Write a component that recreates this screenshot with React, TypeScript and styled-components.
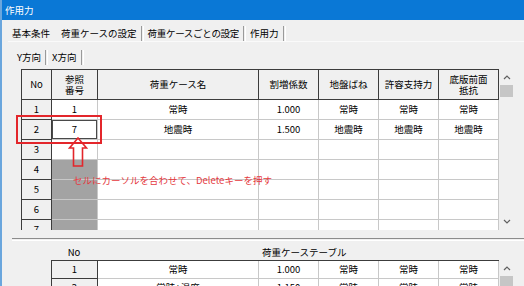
import React from "react";
import styled, { createGlobalStyle } from "styled-components";

const GlobalStyle = createGlobalStyle`
  html, body {
    margin: 0;
    padding: 0;
    background: #f0f0f0;
  }
  body {
    font-family: "Noto Sans CJK JP", "Noto Sans", sans-serif;
    font-size: 9.5px;
    color: #000;
  }
`;

const Window = styled.div`
  width: 524px;
  height: 286px;
  overflow: hidden;
  box-sizing: border-box;
  border-left: 2px solid #6aa6dd;
  display: flex;
  flex-direction: column;
  background: #f0f0f0;
`;

const TitleBar = styled.div`
  height: 20px;
  flex: none;
  background: #0a78d6;
  color: #fff;
  font-size: 9.5px;
  display: flex;
  align-items: center;
  padding-left: 3px;
`;

const Content = styled.div`
  display: flex;
  flex-direction: column;
  padding-left: 10px;
`;

const TabStrip = styled.div`
  display: flex;
  align-items: center;
  height: 16px;
  margin-top: 5px;
  margin-left: -4px;
  border-bottom: 1px solid #fafafa;
`;

const SubTabStrip = styled.div`
  display: flex;
  align-items: center;
  height: 18px;
  margin-top: 6px;
  padding-left: 1px;
`;

const Tab = styled.span<{ $tight?: boolean }>`
  padding: 0 4px;
  white-space: nowrap;
  line-height: 14px;
  letter-spacing: ${(p) => (p.$tight ? "-0.3px" : "normal")};
`;

const TabSep = styled.span<{ $hidden?: boolean }>`
  width: 1px;
  height: 15px;
  border-left: 1px solid ${(p) => (p.$hidden ? "transparent" : "#9a9a9a")};
  border-right: 1px solid ${(p) => (p.$hidden ? "transparent" : "#ffffff")};
`;

const GridArea = styled.div`
  position: relative;
  margin-top: 3px;
  margin-left: 9px;
  width: 494px;
`;

const GridClip = styled.div<{ $h: number }>`
  display: flex;
  height: ${(p) => p.$h}px;
  overflow: hidden;
`;

const Grid = styled.div<{ $cols: string; $rows: string }>`
  display: grid;
  grid-template-columns: ${(p) => p.$cols};
  grid-template-rows: ${(p) => p.$rows};
  grid-auto-rows: 20px;
  border-left: 1px solid #3c3c3c;
  border-top: 1px solid #3c3c3c;
  align-self: flex-start;
`;

type CellKind = "head" | "row" | "data" | "shaded";

const Cell = styled.div<{ $kind: CellKind; $focus?: boolean }>`
  box-sizing: border-box;
  display: flex;
  align-items: center;
  justify-content: center;
  text-align: center;
  line-height: 11px;
  white-space: pre-line;
  overflow: hidden;
  background: ${(p) =>
    p.$kind === "data" ? "#ffffff" : p.$kind === "shaded" ? "#a3a3a3" : "#f0f0f0"};
  border-right: 1px solid
    ${(p) => (p.$kind === "head" || p.$kind === "row" ? "#3c3c3c" : "#c8c8c8")};
  border-bottom: 1px solid
    ${(p) => (p.$kind === "head" || p.$kind === "row" ? "#3c3c3c" : "#c8c8c8")};
  box-shadow: ${(p) => (p.$focus ? "inset 0 0 0 1px #4a4a4a" : "none")};
`;

const ScrollBar = styled.div`
  width: 16px;
  flex: none;
  background: #f0f0f0;
  display: flex;
  flex-direction: column;
  justify-content: space-between;
  border-right: 1px solid #e4e4e4;
`;

const ScrollTop = styled.div`
  display: flex;
  flex-direction: column;
`;

const ArrowBtn = styled.div`
  height: 16px;
  display: flex;
  align-items: center;
  justify-content: center;
`;

const Thumb = styled.div<{ $h: number }>`
  height: ${(p) => p.$h}px;
  margin: 0 2px 0 1px;
  background: #c6c6c6;
`;

const RedBox = styled.div`
  position: absolute;
  left: -5px;
  top: 46px;
  width: 86px;
  height: 29px;
  box-sizing: border-box;
  border: 2px solid #e3262b;
`;

const ArrowMark = styled.svg`
  position: absolute;
  left: 47px;
  top: 68px;
`;

const Note = styled.div`
  position: absolute;
  left: 52px;
  top: 104px;
  color: #e5393e;
  font-size: 9.5px;
  white-space: nowrap;
`;

const Divider = styled.div`
  margin-top: 8px;
  height: 1px;
  border-top: 1px solid #8c8c8c;
  border-bottom: 1px solid #ffffff;
`;

const LabelRow = styled.div`
  display: flex;
  align-items: center;
  height: 14px;
  margin-top: 4px;
`;

const Label = styled.span<{ $w: number; $center?: boolean }>`
  width: ${(p) => p.$w}px;
  text-align: ${(p) => (p.$center ? "center" : "left")};
  white-space: nowrap;
`;

const LowerArea = styled.div`
  margin-left: 39px;
  margin-top: 1px;
  width: 464px;
`;

const Chevron = ({ up }: { up?: boolean }) => (
  <svg width="8" height="6" viewBox="0 0 8 6">
    <polyline
      points={up ? "1,5 4,2 7,5" : "1,1 4,4 7,1"}
      fill="none"
      stroke="#606060"
      strokeWidth="1.2"
    />
  </svg>
);

const upperHead = ["No", "参照\n番号", "荷重ケース名", "割増係数", "地盤ばね", "許容支持力", "底版前面\n抵抗"];

const upperRows = [
  ["1", "1", "常時", "1.000", "常時", "常時", "常時"],
  ["2", "7", "地震時", "1.500", "地震時", "地震時", "地震時"],
  ["3", "", "", "", "", "", ""],
  ["4", "", "", "", "", "", ""],
  ["5", "", "", "", "", "", ""],
  ["6", "", "", "", "", "", ""],
  ["7", "", "", "", "", "", ""],
];

const lowerRows = [
  ["1", "常時", "1.000", "常時", "常時", "常時"],
  ["2", "常時+温度", "1.150", "常時", "常時", "常時"],
];

export default function App() {
  return (
    <>
      <GlobalStyle />
      <Window>
        <TitleBar>作用力</TitleBar>
        <Content>
          <TabStrip>
            <Tab>基本条件</Tab>
            <TabSep $hidden />
            <Tab>荷重ケースの設定</Tab>
            <TabSep />
            <Tab $tight>荷重ケースごとの設定</Tab>
            <TabSep />
            <Tab>作用力</Tab>
            <TabSep />
          </TabStrip>
          <SubTabStrip>
            <Tab>Y方向</Tab>
            <TabSep />
            <Tab>X方向</Tab>
            <TabSep />
          </SubTabStrip>

          <GridArea>
            <GridClip $h={161}>
              <Grid $cols="30px 46px 161px 60px 60px 60px 60px" $rows="30px">
                {upperHead.map((h, i) => (
                  <Cell key={"h" + i} $kind="head">
                    {h}
                  </Cell>
                ))}
                {upperRows.map((r, ri) =>
                  r.map((v, ci) => (
                    <Cell
                      key={ri + "-" + ci}
                      $kind={ci === 0 ? "row" : ci === 1 && ri >= 3 ? "shaded" : "data"}
                      $focus={ri === 1 && ci === 1}
                    >
                      {v}
                    </Cell>
                  ))
                )}
              </Grid>
              <ScrollBar>
                <ScrollTop>
                  <ArrowBtn>
                    <Chevron up />
                  </ArrowBtn>
                  <Thumb $h={12} />
                </ScrollTop>
                <ArrowBtn>
                  <Chevron />
                </ArrowBtn>
              </ScrollBar>
            </GridClip>
            <RedBox />
            <ArrowMark width="20" height="30" viewBox="0 0 20 30">
              <polygon
                points="10,1 18.5,11 14.5,11 14.5,29 5.5,29 5.5,11 1.5,11"
                fill="none"
                stroke="#e3262b"
                strokeWidth="1.6"
                strokeLinejoin="miter"
              />
            </ArrowMark>
            <Note>セルにカーソルを合わせて、Deleteキーを押す</Note>
          </GridArea>

          <Divider />

          <LabelRow>
            <Label $w={39} />
            <Label $w={46} $center>
              No
            </Label>
            <Label $w={165} />
            <Label $w={120}>荷重ケーステーブル</Label>
          </LabelRow>

          <LowerArea>
            <GridClip $h={40}>
              <Grid $cols="46px 161px 60px 60px 60px 60px" $rows="18px 18px">
                {lowerRows.map((r, ri) =>
                  r.map((v, ci) => (
                    <Cell key={ri + "-" + ci} $kind={ci === 0 ? "row" : "data"}>
                      {v}
                    </Cell>
                  ))
                )}
              </Grid>
              <ScrollBar>
                <ScrollTop>
                  <ArrowBtn>
                    <Chevron up />
                  </ArrowBtn>
                  <Thumb $h={20} />
                </ScrollTop>
              </ScrollBar>
            </GridClip>
          </LowerArea>
        </Content>
      </Window>
    </>
  );
}
